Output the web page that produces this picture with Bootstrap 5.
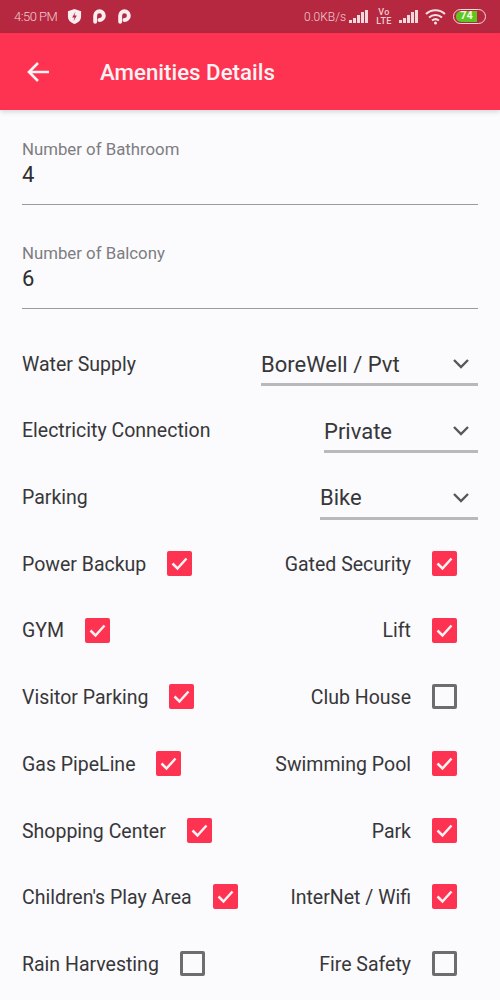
<!DOCTYPE html>
<html lang="en"><head><meta charset="utf-8"><title>Amenities Details</title>
<link href="https://cdn.jsdelivr.net/npm/bootstrap@5.3.0/dist/css/bootstrap.min.css" rel="stylesheet">
<style>
html,body{height:1000px;overflow:hidden}
body{background:#fbfafc;font-family:Roboto,"Liberation Sans",sans-serif;color:#37373a}
.stat-bar{height:33px;background:#b5283f;color:#f3ccd3;padding:0 14px;font-size:13px}
.stat-time{font-weight:300;font-size:13px;letter-spacing:-.5px}
.stat-net{font-size:12px;font-weight:300;letter-spacing:0;margin-right:3px}
.stat-volte{font-size:9px;line-height:9px;font-weight:500;text-align:center;letter-spacing:.4px;margin-left:7px;width:16px}
.sig-two{margin-left:7px}
.wifi-ic{margin-left:6px}
.shield-ic{margin-left:10px}
.p-one{margin-left:11px}
.p-two{margin-left:12px}
.batt{width:33px;height:15px;border:1.5px solid #f3d9dd;border-radius:8px;padding:1px;display:flex;margin-left:7px}
.batt-fill{background:#5fc51f;color:#f3f7ea;font-size:11px;font-weight:700;line-height:10px;width:21px;border-radius:5px 0 0 5px;margin-left:1px;text-align:center}
.app-bar{height:77px;background:#fd3351;color:#fdf2f4;padding-left:26px;box-shadow:0 2px 5px rgba(0,0,0,.15)}
.app-title{font-size:22.3px;font-weight:500;margin:2px 0 0 49px;line-height:1}
.form-area{padding:0 22px}
.num-field{height:104px;border-bottom:1.5px solid #9a9a9e;line-height:1}
.first-field{height:95px}
.field-label{color:#7d7d82;font-size:16.8px;padding-top:40px;line-height:17px}
.first-field .field-label{padding-top:31px}
.field-value{font-size:22px;color:#2e2e31;margin-top:6px}
.set-row{height:66.7px}
.row-one{margin-top:22px}
.row-label{font-size:19.5px;white-space:nowrap}
.drop{border-bottom:3px solid #b9b9bd;height:38px;margin-top:6px;font-size:22px;padding-bottom:3px;color:#37373a}
.drop-water{width:217px}
.drop-elec{width:154px}
.drop-park{width:158px}
.chev{margin-right:7px}
.ml-gap{margin-left:21px}
.right-box{margin-left:21px;margin-right:21px}
.tick,.untick{width:25px;height:25px;border-radius:2px;flex:none;margin-bottom:2px}
.tick{background:#fd3351;display:flex}
.untick{border:3px solid #6d6d70}
</style></head><body>
<div class="stat-bar d-flex align-items-center">
<span class="stat-time">4:50 PM</span>
<svg class="shield-ic" width="15" height="17" viewBox="0 0 16 18"><path d="M8 1 15 3.500V9c0 4-3 6.700-7 8-4-1.300-7-4-7-8V3.500z" fill="#fbeef0"/><path d="M9 4 5.500 10H8l-1 4 3.500-6H8z" fill="#b5283f"/></svg>
<svg class="p-one" width="13" height="15" viewBox="0 0 15 16"><path d="M2.500 14V7a5 5 0 1 1 5 5" fill="none" stroke="#fbeef0" stroke-width="4.500" stroke-linecap="round"/></svg>
<svg class="p-two" width="13" height="15" viewBox="0 0 15 16"><path d="M2.500 14V7a5 5 0 1 1 5 5" fill="none" stroke="#fbeef0" stroke-width="4.500" stroke-linecap="round"/></svg>
<span class="stat-net ms-auto">0.0KB/s</span>
<svg width="20" height="15" viewBox="0 0 20 15"><g fill="#f3d9dd"><rect x="0" y="11" width="3" height="3"/><rect x="4" y="9" width="3" height="5"/><rect x="8" y="6" width="3" height="8"/><rect x="12" y="3" width="3" height="11"/><rect x="16" y="1" width="3" height="13"/></g></svg>
<div class="stat-volte">Vo<br>LTE</div>
<svg class="sig-two" width="20" height="15" viewBox="0 0 20 15"><g fill="#f3d9dd"><rect x="0" y="11" width="3" height="3"/><rect x="4" y="9" width="3" height="5"/><rect x="8" y="6" width="3" height="8"/><rect x="12" y="3" width="3" height="11"/><rect x="16" y="1" width="3" height="13"/></g></svg>
<svg class="wifi-ic" width="21" height="17" viewBox="0 0 21 17"><g fill="none" stroke="#f3e1e4" stroke-width="2"><path d="M1 6c5.500-5 13.500-5 19 0"/><path d="M4 9.500c3.800-3.300 9.200-3.300 13 0"/><path d="M7 12.500c2-1.600 5-1.600 7 0"/></g><circle cx="10.500" cy="15" r="1.500" fill="#f3e1e4"/></svg>
<div class="batt"><div class="batt-fill">74</div></div>
</div>
<div class="app-bar d-flex align-items-center">
<svg width="25" height="24" viewBox="0 0 25 24"><path d="M23 12H3M12 3l-9 9 9 9" fill="none" stroke="#fdf2f4" stroke-width="2.600"/></svg>
<h1 class="app-title">Amenities Details</h1>
</div>
<main class="form-area">
<div class="num-field first-field"><div class="field-label">Number of Bathroom</div><div class="field-value">4</div></div>
<div class="num-field"><div class="field-label">Number of Balcony</div><div class="field-value">6</div></div>
<div class="set-row row-one d-flex align-items-center justify-content-between"><span class="row-label">Water Supply</span><div class="drop drop-water d-flex align-items-center justify-content-between">BoreWell / Pvt<svg class="chev" width="20" height="12" viewBox="0 0 20 12"><path d="M3 2l7 7 7-7" fill="none" stroke="#58585c" stroke-width="2.400"/></svg></div></div>
<div class="set-row d-flex align-items-center justify-content-between"><span class="row-label">Electricity Connection</span><div class="drop drop-elec d-flex align-items-center justify-content-between">Private<svg class="chev" width="20" height="12" viewBox="0 0 20 12"><path d="M3 2l7 7 7-7" fill="none" stroke="#58585c" stroke-width="2.400"/></svg></div></div>
<div class="set-row d-flex align-items-center justify-content-between"><span class="row-label">Parking</span><div class="drop drop-park d-flex align-items-center justify-content-between">Bike<svg class="chev" width="20" height="12" viewBox="0 0 20 12"><path d="M3 2l7 7 7-7" fill="none" stroke="#58585c" stroke-width="2.400"/></svg></div></div>
<div id="checks"></div>
</main>
<script>
const tick='<span class="tick ml-gap"><svg width="25" height="25" viewBox="0 0 25 25"><path d="M5.500 12.500l5 5 9-10" fill="none" stroke="#fdf2f4" stroke-width="2.500"/></svg></span>';
const untick='<span class="untick ml-gap"></span>';
const rows=[["Power Backup",1,"Gated Security",1],["GYM",1,"Lift",1],["Visitor Parking",1,"Club House",0],["Gas PipeLine",1,"Swimming Pool",1],["Shopping Center",1,"Park",1],["Children's Play Area",1,"InterNet / Wifi",1],["Rain Harvesting",0,"Fire Safety",0]];
document.getElementById('checks').innerHTML=rows.map(r=>`<div class="set-row d-flex align-items-center justify-content-between"><div class="d-flex align-items-center"><span class="row-label">${r[0]}</span>${r[1]?tick:untick}</div><div class="d-flex align-items-center"><span class="row-label">${r[2]}</span>${(r[3]?tick:untick).replace('ml-gap','right-box')}</div></div>`).join('');
</script>
</body></html>
